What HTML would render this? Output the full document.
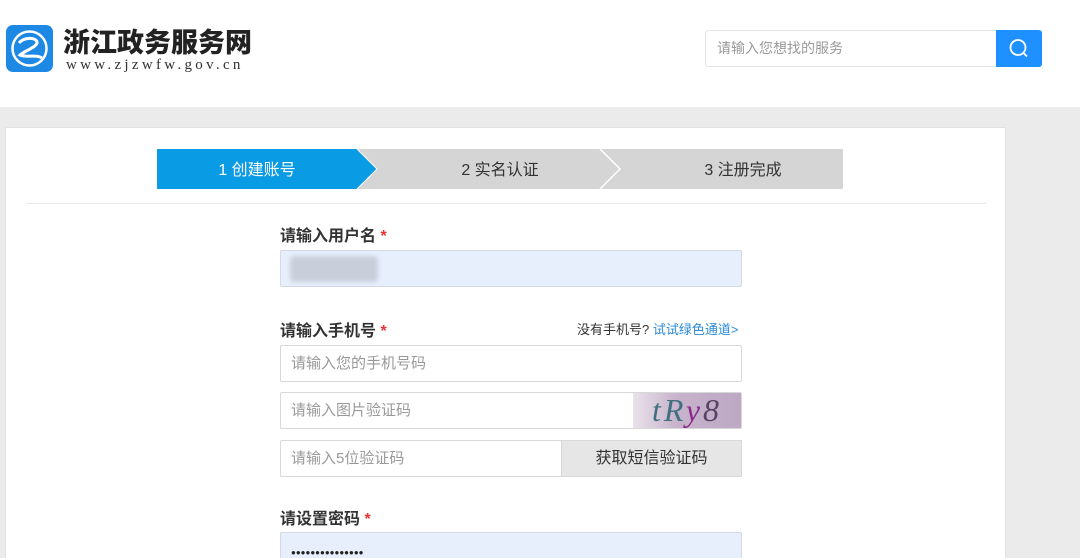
<!DOCTYPE html><html><head><meta charset="utf-8"><style>
*{margin:0;padding:0;box-sizing:border-box}
html,body{width:1080px;height:558px;overflow:hidden}
body{background:#ebebeb;font-family:"Liberation Sans","Noto Sans CJK SC",sans-serif;position:relative}
.abs{position:absolute}
.hdr{left:0;top:0;width:1080px;height:107px;background:#fff}
.card{left:5px;top:127px;width:1001px;height:440px;background:#fff;border:1px solid #e2e2e2}
.lbl{font-size:16px;font-weight:bold;color:#333}
.lbl b{color:#e33;font-weight:bold}
.inp{left:280px;width:462px;height:37px;border:1px solid #d8d8d8;border-radius:2px;background:#fff;font-size:15px;color:#999;padding-left:10px;line-height:35px}
</style></head><body>
<div class="abs hdr"></div>
<svg class="abs" style="left:6px;top:25px" width="47" height="47" viewBox="0 0 47 47"><rect width="47" height="47" rx="7" fill="#1e88e5"/><circle cx="23.5" cy="23.5" r="17" fill="none" stroke="#fff" stroke-width="2.5"/><path d="M13 18 C18 12 30 12 31 17 C32 22 18 26 14 30 C20 33 30 29 36 33" fill="none" stroke="#fff" stroke-width="3"/></svg>
<div class="abs" style="left:63px;top:23px;font-size:27px;font-weight:900;color:#222;letter-spacing:0px;font-family:'Noto Sans CJK SC',sans-serif;line-height:36px">浙江政务服务网</div>
<div class="abs" style="left:66px;top:57px;font-size:15px;color:#333;letter-spacing:3.3px;font-family:'Liberation Serif',serif">www.zjzwfw.gov.cn</div>
<div class="abs" style="left:705px;top:30px;width:292px;height:37px;border:1px solid #e5e5e5;border-radius:3px 0 0 3px;font-size:14px;color:#999;padding-left:11px;line-height:35px">请输入您想找的服务</div>
<div class="abs" style="left:996px;top:30px;width:46px;height:37px;background:#1e90ff;border-radius:0 3px 3px 0"><svg width="46" height="37"><circle cx="22" cy="17.5" r="7.5" fill="none" stroke="#fff" stroke-width="1.8"/><path d="M27.5 23 L31 26.5" stroke="#fff" stroke-width="1.8"/></svg></div>
<div class="abs card"></div>
<svg class="abs" style="left:157px;top:149px" width="686" height="40">
<rect x="0" y="0" width="686" height="40" fill="#d5d5d5"/>
<polygon points="0,0 200,0 220,20 200,40 0,40" fill="#0a9be5"/>
<polyline points="443,0 463,20 443,40" fill="none" stroke="#fff" stroke-width="1.5"/>
<polyline points="200,0 220,20 200,40" fill="none" stroke="#fff" stroke-width="1"/>
<text x="100" y="26" font-size="16" fill="#fff" text-anchor="middle" font-family="Liberation Sans,Noto Sans CJK SC,sans-serif">1 创建账号</text>
<text x="343" y="26" font-size="16" fill="#333" text-anchor="middle" font-family="Liberation Sans,Noto Sans CJK SC,sans-serif">2 实名认证</text>
<text x="586" y="26" font-size="16" fill="#333" text-anchor="middle" font-family="Liberation Sans,Noto Sans CJK SC,sans-serif">3 注册完成</text>
</svg>
<div class="abs" style="left:26px;top:203px;width:960px;height:1px;background:#e8e8e8"></div>
<div class="abs lbl" style="left:280px;top:222px">请输入用户名 <b>*</b></div>
<div class="abs inp" style="top:250px;background:#e8effc;border-color:#d4dae4"></div>
<div class="abs" style="left:290px;top:256px;width:88px;height:26px;background:#c9cfda;border-radius:4px;filter:blur(2px)"></div>
<div class="abs lbl" style="left:280px;top:317px">请输入手机号 <b>*</b></div>
<div class="abs" style="left:577px;top:319px;font-size:13px;color:#333">没有手机号? <span style="color:#2a8ad8">试试绿色通道&gt;</span></div>
<div class="abs inp" style="top:345px">请输入您的手机号码</div>
<div class="abs inp" style="top:392px">请输入图片验证码</div>
<div class="abs" style="left:633px;top:393px;width:108px;height:35px;background:linear-gradient(90deg,#e9e2ea,#c7b3cc 40%,#bda8c4);font-family:'Liberation Serif',serif;font-style:italic;font-size:32px;line-height:35px;text-align:center;letter-spacing:3px"><span style="color:#40707f">tR</span><span style="color:#8a2a8a">y</span><span style="color:#554466">8</span></div>
<div class="abs inp" style="top:440px;width:282px">请输入5位验证码</div>
<div class="abs" style="left:561px;top:440px;width:181px;height:37px;background:#e6e6e6;border:1px solid #d8d8d8;font-size:16px;color:#333;text-align:center;line-height:35px">获取短信验证码</div>
<div class="abs lbl" style="left:280px;top:505px">请设置密码 <b>*</b></div>
<div class="abs inp" style="top:532px;height:40px;background:#e8effc;border-color:#d4dae4;color:#222;font-size:8px;line-height:36px;padding-top:2px;letter-spacing:0px">●●●●●●●●●●●●●●●</div>
</body></html>
